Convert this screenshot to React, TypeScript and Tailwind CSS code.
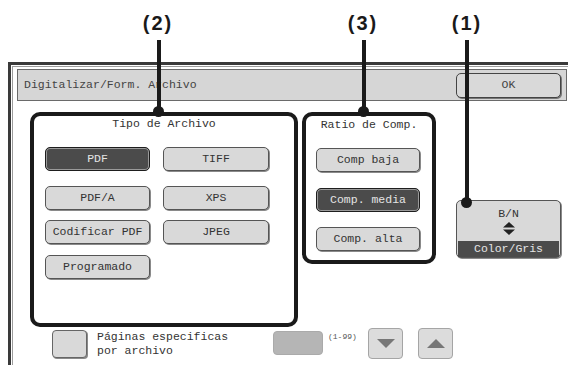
import clsx from 'clsx';

type BtnProps = { label: string; active?: boolean; w: string };

const Btn = ({ label, active, w }: BtnProps) => (
  <div
    className={clsx(
      'h-[24px] rounded-[5px] border flex items-center justify-center text-[11.5px] leading-none',
      w,
      active
        ? 'bg-[#4b4b4b] text-[#e4e4e4] border-[#1e1e1e] shadow-[inset_0_0_0_1px_#9a9a9a]'
        : 'bg-[#d9d9d9] text-[#333] border-[#555] shadow-[1px_1px_0_#8a8a8a]'
    )}
  >
    {label}
  </div>
);

const Callout = ({ label, x, labelLeft, lineLeft, lineHeight, dotLeft, dotTop }: {
  label: string; x?: number; labelLeft: string; lineLeft: string; lineHeight: string; dotLeft: string; dotTop: string;
}) => (
  <>
    <div className={clsx('absolute top-[13px] w-[40px] text-center font-["Liberation_Sans",Arial,sans-serif] font-bold text-[20px] leading-[20px] tracking-[2px] text-[#1a1a1a]', labelLeft)}>
      {label}
    </div>
    <div className={clsx('absolute top-[40px] w-[4px] bg-[#1a1a1a]', lineLeft, lineHeight)} />
    <div className={clsx('absolute w-[11px] h-[11px] rounded-full bg-[#1a1a1a]', dotLeft, dotTop)} />
  </>
);

const App = () => {
  return (
    <div className="relative w-[568px] h-[365px] overflow-hidden bg-white font-['Liberation_Mono',monospace] text-[#333]">
      <div className="ml-[8px] mt-[62px] w-[600px] h-[320px] border-l-[3px] border-t-[3px] border-[#3a3a3a]">
        <div className="ml-[1px] mt-[1px] h-full border-l border-t border-[#9c9c9c]">
          {/* title bar */}
          <div className="ml-[4px] mt-[2px] w-[550px] h-[32px] bg-[#d6d6d6] border border-[#6a6a6a] flex items-center justify-between">
            <span className="pl-[6px] text-[11.5px] text-[#444]">Digitalizar/Form. Archivo</span>
            <div className="mr-[5px] w-[105px] h-[25px] rounded-[5px] bg-[#d9d9d9] border border-[#444] shadow-[1px_1px_0_#777] flex items-center justify-center text-[11.5px] text-[#444]">
              OK
            </div>
          </div>

          <div className="ml-[17px] mt-[11px] flex items-start">
            {/* Tipo de Archivo */}
            <div className="w-[268px] h-[215px] border-4 border-[#1a1a1a] rounded-[10px] bg-white">
              <div className="pt-[1px] text-center text-[11.5px] leading-[14px]">Tipo de Archivo</div>
              <div className="pl-[11px] mt-[16px] flex flex-col">
                <div className="flex gap-[13px]">
                  <Btn label="PDF" active w="w-[105px]" />
                  <Btn label="TIFF" w="w-[106px]" />
                </div>
                <div className="flex gap-[13px] mt-[15px]">
                  <Btn label="PDF/A" w="w-[105px]" />
                  <Btn label="XPS" w="w-[106px]" />
                </div>
                <div className="flex gap-[13px] mt-[10px]">
                  <Btn label="Codificar PDF" w="w-[105px]" />
                  <Btn label="JPEG" w="w-[106px]" />
                </div>
                <div className="flex gap-[13px] mt-[11px]">
                  <Btn label="Programado" w="w-[105px]" />
                </div>
              </div>
            </div>

            {/* Ratio de Comp. */}
            <div className="ml-[4px] w-[134px] h-[152px] border-4 border-[#1a1a1a] rounded-[10px] bg-white">
              <div className="pt-[2px] text-center text-[11.5px] leading-[14px]">Ratio de Comp.</div>
              <div className="pl-[10px] mt-[16px] flex flex-col">
                <Btn label="Comp baja" w="w-[104px]" />
                <div className="mt-[16px]"><Btn label="Comp. media" active w="w-[104px]" /></div>
                <div className="mt-[15px]"><Btn label="Comp. alta" w="w-[104px]" /></div>
              </div>
            </div>

            {/* B/N - Color/Gris */}
            <div className="ml-[20px] mt-[88px] w-[105px] h-[58px] rounded-[5px] bg-[#d9d9d9] border border-[#555] shadow-[1px_1px_0_#8a8a8a] flex flex-col items-center">
              <div className="mt-[6px] text-[11.5px] leading-[14px]">B/N</div>
              <svg width="12" height="13" viewBox="0 0 12 13" className="mt-[1px]">
                <polygon points="0,5.5 6,0 12,5.5" fill="#222" />
                <polygon points="0,7.5 12,7.5 6,13" fill="#222" />
              </svg>
              <div className="mt-[6px] w-[101px] h-[16px] bg-[#4b4b4b] text-[#e4e4e4] text-[11.5px] leading-[16px] text-center">
                Color/Gris
              </div>
            </div>
          </div>

          {/* bottom row */}
          <div className="ml-[39px] mt-[3px] flex items-start">
            <div className="w-[35px] h-[28px] rounded-[4px] bg-[#d9d9d9] border border-[#666] shadow-[1px_1px_0_#8a8a8a]" />
            <div className="ml-[10px] w-[176px] text-[11.5px] leading-[14px]">
              Páginas especificas
              <br />
              por archivo
            </div>
            <div className="mt-[1px] w-[50px] h-[24px] rounded-[4px] bg-[#b5b5b5] border border-[#aaa]" />
            <div className="ml-[5px] mt-[2px] w-[40px] text-[8px] leading-[10px] text-[#555]">(1-99)</div>
            <div className="-mt-[2px] w-[35px] h-[31px] rounded-[4px] bg-[#dcdcdc] border border-[#a5a5a5] flex items-center justify-center">
              <svg width="18" height="9" viewBox="0 0 18 9"><polygon points="0,0 18,0 9,9" fill="#777" /></svg>
            </div>
            <div className="ml-[15px] -mt-[2px] w-[35px] h-[31px] rounded-[4px] bg-[#dcdcdc] border border-[#a5a5a5] flex items-center justify-center">
              <svg width="18" height="9" viewBox="0 0 18 9"><polygon points="0,9 18,9 9,0" fill="#777" /></svg>
            </div>
          </div>
        </div>
      </div>

      {/* annotation callouts */}
      <Callout label="(2)" labelLeft="left-[138px]" lineLeft="left-[157px]" lineHeight="h-[71px]" dotLeft="left-[153px]" dotTop="top-[106px]" />
      <Callout label="(3)" labelLeft="left-[343px]" lineLeft="left-[362px]" lineHeight="h-[71px]" dotLeft="left-[358px]" dotTop="top-[106px]" />
      <Callout label="(1)" labelLeft="left-[447px]" lineLeft="left-[465px]" lineHeight="h-[160px]" dotLeft="left-[461px]" dotTop="top-[197px]" />
    </div>
  );
};

export default App;
